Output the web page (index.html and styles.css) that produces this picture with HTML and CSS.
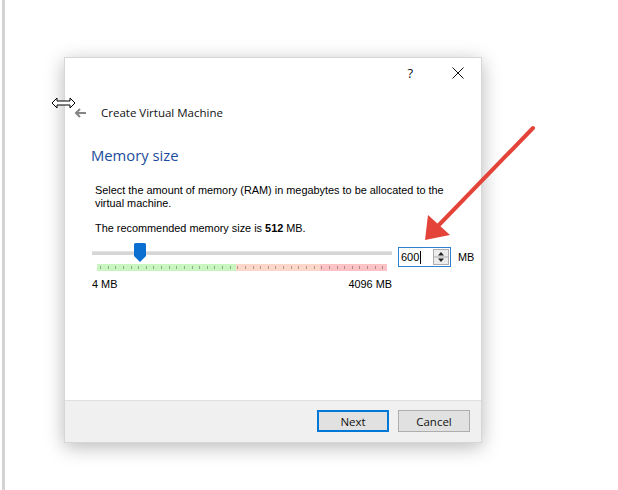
FILE: index.html
```html
<!DOCTYPE html>
<html lang="en">
<head>
  <meta charset="UTF-8" />
  <title>Create Virtual Machine</title>
  <link rel="stylesheet" href="styles.css">
</head>
<body>
  <div class="edge"></div>
  <div class="stage">
    <!-- Dialog -->
    <div class="dialog">
      <div class="titlebar">
        <span class="help">?</span>
        <svg class="close" width="12" height="12" viewBox="0 0 12 12">
          <path d="M0.5 0.5 L11.5 11.5 M11.5 0.5 L0.5 11.5" stroke="#111" stroke-width="1" fill="none"/>
        </svg>
      </div>
      <div class="header">
        <svg class="back" width="12" height="10" viewBox="0 0 12 10">
          <path d="M12 5 H2 M6 1 L2 5 L6 9" stroke="#858585" stroke-width="2" fill="none"/>
        </svg>
        <span class="title">Create Virtual Machine</span>
      </div>
      <div class="content">
        <h1 class="heading">Memory size</h1>
        <p class="desc">Select the amount of memory (RAM) in megabytes to be allocated to the virtual machine.</p>
        <p class="desc">The recommended memory size is <b>512</b> MB.</p>
        <div class="memrow">
          <div class="slider">
            <div class="track"></div>
            <div class="handle">
              <svg width="12" height="20" viewBox="0 0 12 20">
                <path d="M0 1.5 Q0 0 1.5 0 H10.5 Q12 0 12 1.5 V13 L6 19 L0 13 Z" fill="#0a6fd1"/>
              </svg>
            </div>
            <div class="scale">
              <div class="zone ok"></div>
              <div class="zone warn"></div>
              <div class="zone bad"></div>
            </div>
            <div class="limits">
              <span>4 MB</span>
              <span>4096 MB</span>
            </div>
          </div>
          <div class="spin">
            <span class="value">600<i class="caret"></i></span>
            <span class="spinbtns">
              <svg width="16" height="16" viewBox="0 0 16 16">
                <rect x="0.5" y="0.5" width="15" height="15" fill="#ececec" stroke="#adadad"/>
                <path d="M8 3 L11 6.5 H5 Z M8 13 L11 9.5 H5 Z" fill="#222"/>
                <path d="M1 8 H15" stroke="#adadad"/>
              </svg>
            </span>
          </div>
          <span class="unit">MB</span>
        </div>
      </div>
      <div class="footer">
        <button class="btn primary">Next</button>
        <button class="btn">Cancel</button>
      </div>
    </div>
  </div>

  <!-- Mouse cursor over the dialog edge -->
  <svg class="cursor" width="26" height="12" viewBox="0 0 26 12">
    <path d="M1 6 L6 1 V4 H19 V1 L24 6 L19 11 V8 H6 V11 Z" fill="#fff" stroke="#000" stroke-width="1" stroke-linejoin="miter"/>
  </svg>

  <!-- Annotation arrow -->
  <svg class="annot" width="618" height="490" viewBox="0 0 618 490">
    <path d="M533 128 L436 228" stroke="#e34339" stroke-width="4" stroke-linecap="round" fill="none"/>
    <path d="M425 240 L428 215 L450 235 Z" fill="#e34339"/>
  </svg>
</body>
</html>
```

FILE: styles.css
```css
/* Desktop background */
body {
  margin: 0;
  padding: 0;
  width: 618px;
  height: 490px;
  background: #fff;
  font-family: 'Liberation Sans', Arial, sans-serif;
  color: #000;
  display: flex;
  overflow: hidden;
  position: relative;
}
.edge {
  width: 3px;
  margin-left: 2px;
  background: #d3d3d3;
}
.stage {
  padding: 57px 0 0 59px;
}
.dialog {
  width: 418px;
  height: 386px;
  background: #fff;
  border: 1px solid #d6d6d6;
  box-sizing: border-box;
  box-shadow: 0 4px 18px rgba(0, 0, 0, 0.28);
  display: flex;
  flex-direction: column;
}
.titlebar {
  height: 31px;
  display: flex;
  align-items: center;
  justify-content: flex-end;
  padding-right: 17px;
  gap: 39px;
}
.help {
  font-family: 'Open Sans', sans-serif;
  font-size: 13px;
  color: #111;
  margin-top: -2px;
}
.close {
  margin-top: -1px;
}
.header {
  height: 46px;
  display: flex;
  align-items: center;
  padding-left: 9px;
  padding-top: 1px;
  box-sizing: border-box;
}
.back {
  margin-right: 15px;
}
.title {
  font-family: 'Open Sans', sans-serif;
  font-size: 11.5px;
  color: #111;
}
.content {
  flex: 1;
  padding: 10px 0 0 26px;
}
.heading {
  margin: 0;
  font-family: 'Open Sans', sans-serif;
  font-weight: normal;
  font-size: 14.8px;
  color: #1c4d9c;
  line-height: 20px;
}
.desc {
  margin: 19px 0 0 4px;
  font-size: 10.9px;
  line-height: 13px;
  width: 356px;
}
.desc + .desc {
  margin-top: 12px;
}
.memrow {
  display: flex;
  align-items: flex-start;
  margin-top: 12px;
}
.slider {
  width: 300px;
  position: relative;
  padding-top: 4px;
  margin-left: 1px;
}
.track {
  height: 3px;
  background: #d6d6d6;
  border-top: 1px solid #e2e2e2;
}
.handle {
  position: absolute;
  left: 42px;
  top: -4px;
  line-height: 0;
}
.scale {
  display: flex;
  height: 7px;
  margin: 9px 5px 0 5px;
  position: relative;
}
.scale::after {
  content: "";
  position: absolute;
  left: 3px;
  right: 0;
  top: 2px;
  height: 3px;
  background: repeating-linear-gradient(90deg, rgba(0, 0, 0, 0.3) 0 1px, transparent 1px 7.63px);
}
.zone.ok { width: 139px; background: #c9f5c1; }
.zone.warn { width: 84px; background: #fcd7ca; }
.zone.bad { flex: 1; background: #fbc3c5; }
.limits {
  display: flex;
  justify-content: space-between;
  margin-top: 7px;
  font-size: 10.9px;
}
.spin {
  margin-left: 6px;
  width: 53px;
  height: 20px;
  border: 1px solid #2d7fd0;
  box-sizing: border-box;
  display: flex;
  align-items: center;
  justify-content: space-between;
  padding: 0 1px 0 2px;
}
.value {
  font-size: 11px;
  display: flex;
  align-items: center;
}
.caret {
  width: 1px;
  height: 13px;
  background: #000;
  margin-left: 1px;
}
.spinbtns {
  line-height: 0;
}
.unit {
  margin-left: 7px;
  font-size: 10.9px;
  margin-top: 4px;
}
.footer {
  height: 42px;
  background: #f0f0f0;
  border-top: 1px solid #dfdfdf;
  display: flex;
  justify-content: flex-end;
  align-items: flex-start;
  gap: 9px;
  padding: 9px 11px 0 0;
  box-sizing: border-box;
}
.btn {
  width: 72px;
  height: 22px;
  background: #e1e1e1;
  border: 1px solid #adadad;
  font-family: 'Open Sans', sans-serif;
  font-size: 11.5px;
  color: #111;
  padding: 0;
}
.btn.primary {
  border: 2px solid #0078d7;
}
.cursor {
  position: absolute;
  left: 51px;
  top: 97px;
}
.annot {
  position: absolute;
  left: 0;
  top: 0;
  pointer-events: none;
}
```
